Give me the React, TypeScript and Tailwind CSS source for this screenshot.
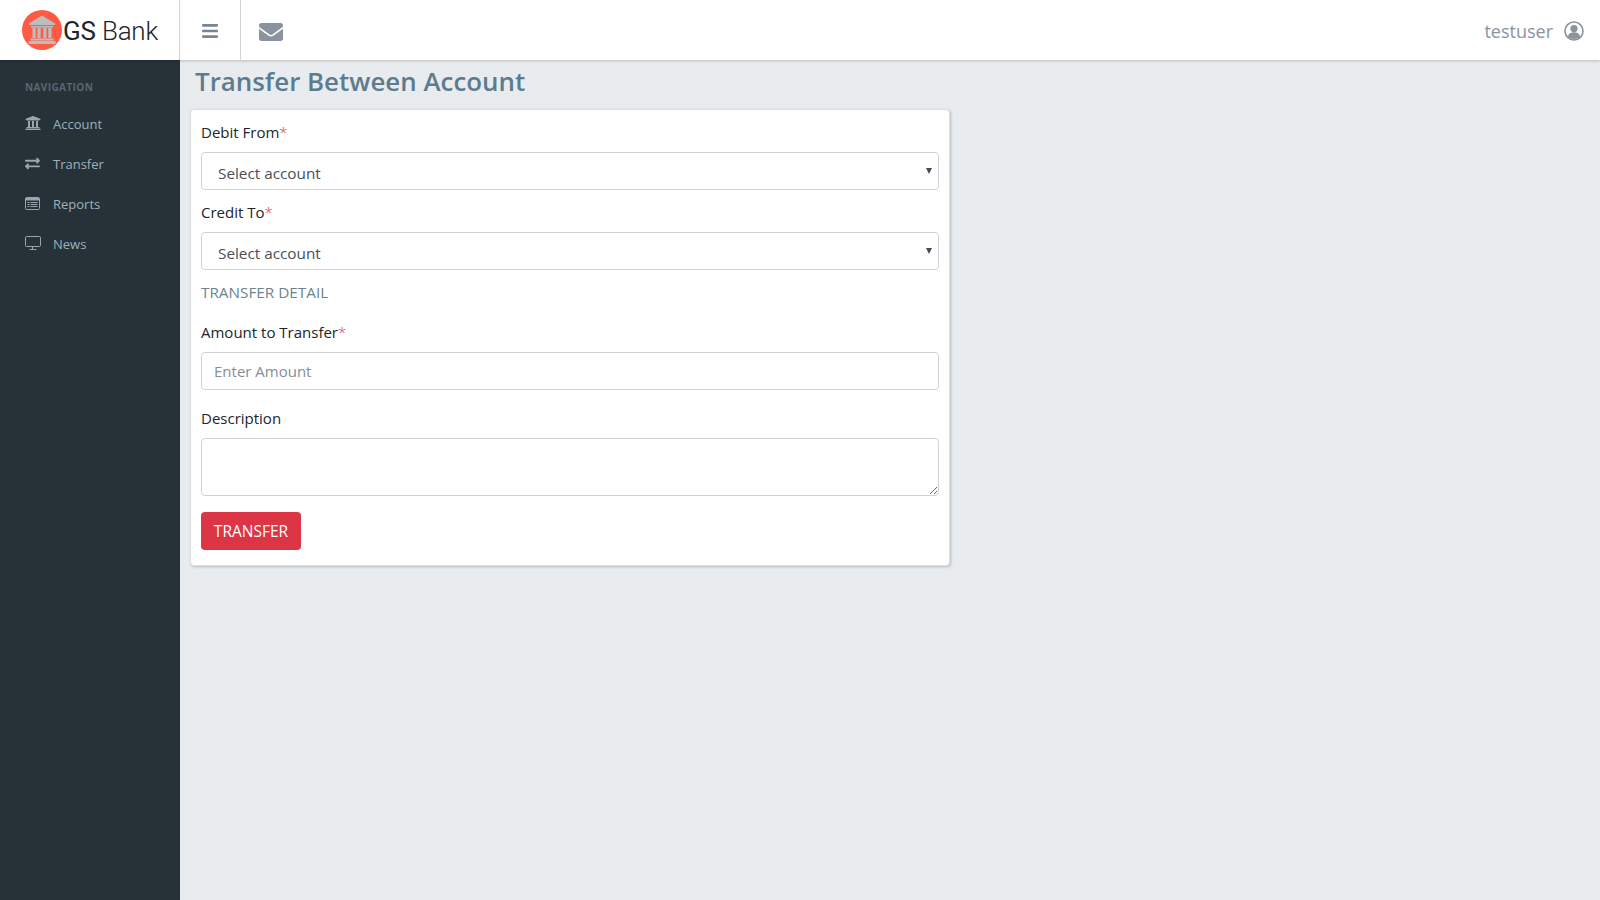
import { FaBars, FaEnvelope, FaExchangeAlt, FaUniversity } from "react-icons/fa";

const bodyFont = "font-['Open_Sans',sans-serif]";

function BankLogo() {
  return (
    <svg width="40" height="40" viewBox="0 0 40 40" className="shrink-0">
      <circle cx="20" cy="20" r="20" fill="#ff5a43" />
      <path d="M20 5.5 L33 13.5 V15 H7 V13.5 Z" fill="#bdbdbd" />
      <rect x="9" y="16" width="22" height="1.6" fill="#bdbdbd" />
      <rect x="10.5" y="18" width="3.2" height="10" fill="#bdbdbd" />
      <rect x="15.5" y="18" width="3.2" height="10" fill="#bdbdbd" />
      <rect x="21.3" y="18" width="3.2" height="10" fill="#bdbdbd" />
      <rect x="26.3" y="18" width="3.2" height="10" fill="#bdbdbd" />
      <rect x="8.5" y="28.5" width="23" height="2" fill="#bdbdbd" />
      <rect x="6.5" y="31" width="27" height="3" fill="#bdbdbd" />
    </svg>
  );
}

function ListIcon() {
  return (
    <svg width="15" height="13" viewBox="0 0 15 13" fill="none">
      <rect x="0.5" y="0.5" width="14" height="12" rx="1" stroke="#9aa5ad" />
      <rect x="1" y="1" width="13" height="2.5" fill="#9aa5ad" />
      <path d="M2.5 5.5h2M2.5 7.5h2M2.5 9.5h2M5.5 5.5h7M5.5 7.5h7M5.5 9.5h7" stroke="#9aa5ad" />
    </svg>
  );
}

function MonitorIcon() {
  return (
    <svg width="16" height="14" viewBox="0 0 16 14" fill="none">
      <rect x="0.5" y="0.5" width="15" height="10" rx="1" stroke="#9aa5ad" />
      <path d="M7.5 11v2M4.5 13.5h7" stroke="#9aa5ad" />
    </svg>
  );
}

const navItems = [
  { label: "Account", icon: <FaUniversity size={16} color="#9aa5ad" /> },
  { label: "Transfer", icon: <FaExchangeAlt size={15} color="#9aa5ad" /> },
  { label: "Reports", icon: <ListIcon /> },
  { label: "News", icon: <MonitorIcon /> },
];

function Label({ text, required }: { text: string; required?: boolean }) {
  return (
    <label className="block h-6 mb-2 text-[15px] leading-6 text-[#212529]">
      {text}
      {required && <span className="font-light text-[#dc3545]">*</span>}
    </label>
  );
}

function AccountSelect() {
  return (
    <div className="relative mb-[10px]">
      <select className="block w-full h-[38px] appearance-none rounded border border-[#ced4da] bg-white pl-4 pt-1 text-[15.3px] text-[#495057] outline-none">
        <option>Select account</option>
      </select>
      <span className="absolute right-[7px] top-4 h-0 w-0 border-x-[3px] border-t-[6px] border-x-transparent border-t-[#444b52]" />
    </div>
  );
}

export default function App() {
  return (
    <div className={`flex h-screen flex-col overflow-hidden bg-[#e9ecef] ${bodyFont}`}>
      <header className="z-10 flex h-[60px] shrink-0 items-stretch bg-white shadow-[0_1px_3px_rgba(0,0,0,0.2)]">
        <div className="flex w-[180px] items-center gap-[1px] border-r border-[#d4d4d4] pl-[22px]">
          <BankLogo />
          <span className="pt-[2px] font-['Roboto',sans-serif] text-[26px] font-light leading-none tracking-[-0.2px] text-[#212529]">
            <span className="font-normal">GS</span> Bank
          </span>
        </div>
        <div className="flex w-[61px] items-center justify-center border-r border-[#d4d4d4] pt-[2px]">
          <FaBars size={18} color="#78848f" />
        </div>
        <div className="flex w-[60px] items-center justify-center pt-1">
          <FaEnvelope size={24} color="#8a939e" />
        </div>
        <div className="ml-auto flex items-center gap-[11px] pr-4 pt-[2px] text-[18px] text-[#8a939e]">
          <span>testuser</span>
          <svg width="20" height="20" viewBox="0 0 20 20" fill="none">
            <circle cx="10" cy="10" r="9" stroke="#8a939e" strokeWidth="1.6" />
            <circle cx="10" cy="7.6" r="3.6" fill="#8a939e" />
            <path d="M3.8 15.5c.8-3 3-4.2 6.2-4.2s5.4 1.2 6.2 4.2C14.6 17.2 12.4 18 10 18s-4.6-.8-6.2-2.5z" fill="#8a939e" />
          </svg>
        </div>
      </header>

      <div className="flex min-h-0 flex-1">
        <aside className="w-[180px] shrink-0 bg-[#263238] pt-5">
          <div className="mb-[11px] pl-[25px] text-[10px] font-bold leading-[14px] tracking-[0.4px] text-[#5c666d]">
            NAVIGATION
          </div>
          <nav className="flex flex-col">
            {navItems.map((item) => (
              <a key={item.label} className="flex h-10 items-center text-[13px] text-[#9fb0bb]">
                <span className="mb-1 flex w-[53px] pl-[25px]">{item.icon}</span>
                {item.label}
              </a>
            ))}
          </nav>
        </aside>

        <main className="min-w-0 flex-1 pl-[10px]">
          <h1 className="ml-[5px] mt-[2px] h-[47px] text-[25.9px] font-semibold leading-[38px] text-[#5c7c8e]">
            Transfer Between Account
          </h1>
          <form className="w-[760px] rounded border border-[#dcdfe2] bg-white px-[10px] pt-[10px] pb-[15px] shadow-[1px_1px_3px_rgba(0,0,0,0.2)]">
            <Label text="Debit From" required />
            <AccountSelect />
            <Label text="Credit To" required />
            <AccountSelect />
            <div className="mb-4 h-6 text-[15.3px] leading-6 text-[#6b8492]">TRANSFER DETAIL</div>
            <Label text="Amount to Transfer" required />
            <input
              placeholder="Enter Amount"
              className="mb-4 block h-[38px] w-full rounded border border-[#ced4da] px-3 text-[15px] text-[#495057] outline-none placeholder:text-[#858e96]"
            />
            <Label text="Description" />
            <textarea className="mb-4 block h-[58px] w-full rounded border border-[#ced4da] px-3 py-1 text-[15px] outline-none" />
            <button
              type="button"
              className="block h-[38px] w-[100px] rounded bg-[#dc3545] pt-[2px] text-[15.5px] text-white"
            >
              TRANSFER
            </button>
          </form>
        </main>
      </div>
    </div>
  );
}
